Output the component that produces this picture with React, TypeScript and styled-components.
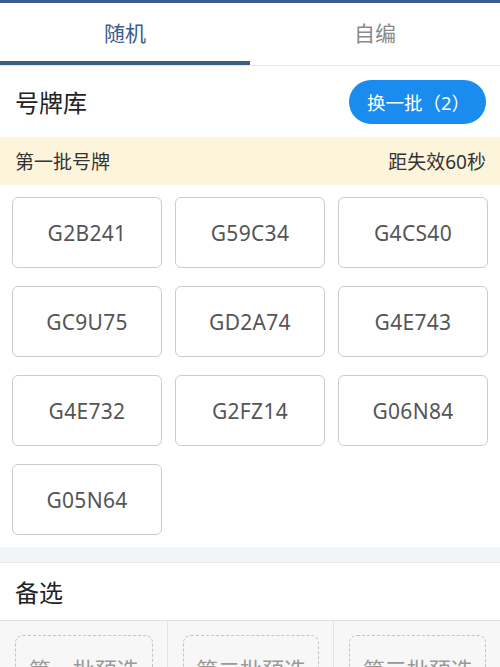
import React, { useState } from "react";
import styled, { createGlobalStyle } from "styled-components";

const GlobalStyle = createGlobalStyle`
  html, body {
    margin: 0;
    padding: 0;
    background: #ffffff;
    font-family: "Noto Sans", "Noto Sans CJK SC", sans-serif;
  }
  * { box-sizing: border-box; }
`;

const plates = [
  "G2B241",
  "G59C34",
  "G4CS40",
  "GC9U75",
  "GD2A74",
  "G4E743",
  "G4E732",
  "G2FZ14",
  "G06N84",
  "G05N64",
];

const presets = ["第一批预选", "第二批预选", "第三批预选"];

const App: React.FC = () => {
  const [tab, setTab] = useState(0);
  return (
    <Page>
      <GlobalStyle />
      <Tabs>
        {["随机", "自编"].map((t, i) => (
          <Tab key={t} $active={tab === i} onClick={() => setTab(i)}>
            {t}
          </Tab>
        ))}
      </Tabs>
      <SectionHead>
        <Title>号牌库</Title>
        <RefreshButton>换一批（2）</RefreshButton>
      </SectionHead>
      <Notice>
        <span>第一批号牌</span>
        <span>距失效60秒</span>
      </Notice>
      <PlateGrid>
        {plates.map((p) => (
          <Plate key={p}>{p}</Plate>
        ))}
      </PlateGrid>
      <Divider />
      <SectionHead $small>
        <Title>备选</Title>
      </SectionHead>
      <PresetRow>
        {presets.map((p) => (
          <PresetCell key={p}>
            <PresetBox>{p}</PresetBox>
          </PresetCell>
        ))}
      </PresetRow>
    </Page>
  );
};
export default App;

const Page = styled.div`
  width: 500px;
  height: 667px;
  overflow: hidden;
  border-top: 3px solid #3b5c8e;
  background: #fff;
`;

const Tabs = styled.div`
  display: flex;
  border-bottom: 1px solid #e3e6ea;
`;

const Tab = styled.div<{ $active: boolean }>`
  flex: 1;
  height: 62px;
  display: flex;
  align-items: center;
  justify-content: center;
  font-size: 21px;
  color: ${(p) => (p.$active ? "#3b5c8e" : "#8a8a8a")};
  border-bottom: 4px solid ${(p) => (p.$active ? "#3b5c8e" : "transparent")};
  padding-top: 0;
  cursor: pointer;
`;

const SectionHead = styled.div<{ $small?: boolean }>`
  display: flex;
  align-items: center;
  justify-content: space-between;
  height: ${(p) => (p.$small ? "57px" : "71px")};
  padding: 0 14px 0 15px;
`;

const Title = styled.div`
  font-size: 24px;
  color: #222;
`;

const RefreshButton = styled.button`
  border: none;
  background: #1a8cf0;
  color: #fff;
  font-family: inherit;
  font-size: 18.5px;
  height: 44px;
  width: 137px;
  border-radius: 22px;
  padding: 0 0 0 2px;
`;

const Notice = styled.div`
  display: flex;
  justify-content: space-between;
  align-items: center;
  height: 48px;
  padding: 0 14px 0 15px;
  background: #fdf5db;
  font-size: 19px;
  color: #333;
`;

const PlateGrid = styled.div`
  display: grid;
  grid-template-columns: repeat(3, 150px);
  column-gap: 13px;
  row-gap: 18px;
  padding: 12px 12px 12px;
`;

const Plate = styled.div`
  height: 71px;
  border: 1.5px solid #c9cdd3;
  border-radius: 6px;
  display: flex;
  align-items: center;
  justify-content: center;
  font-size: 21px;
  color: #555;
  letter-spacing: 0.3px;
`;

const Divider = styled.div`
  height: 16px;
  background: #f2f5f8;
  border-bottom: 1px solid #e6e9ec;
`;

const PresetRow = styled.div`
  display: grid;
  grid-template-columns: repeat(3, 1fr);
  border-top: 1px solid #e3e3e3;
  background: #f7f7f7;
`;

const PresetCell = styled.div`
  padding: 14px 14px 0 15px;
  height: 60px;
  & + & {
    border-left: 1px solid #e3e3e3;
  }
`;

const PresetBox = styled.div`
  height: 80px;
  border: 1.5px dashed #c4c4c4;
  border-radius: 8px;
  display: flex;
  justify-content: center;
  padding-top: 16px;
  font-size: 22px;
  color: #999;
`;
